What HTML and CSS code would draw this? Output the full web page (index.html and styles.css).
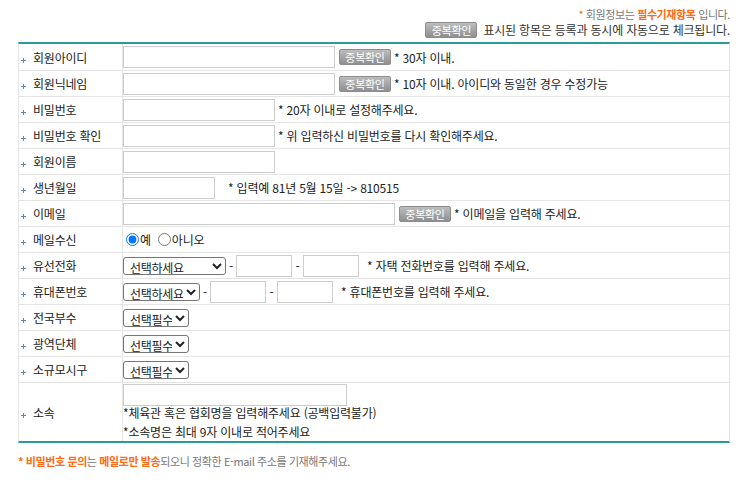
FILE: index.html
```html
<!DOCTYPE html>
<html lang="ko">
<head>
<meta charset="utf-8">
<title>회원가입</title>
<link rel="stylesheet" href="styles.css">
</head>
<body>
<div class="wrap">
  <p class="notice"><span class="req">*</span> 회원정보는 <b class="req">필수기재항목</b> 입니다.</p>
  <p class="notice2"><button class="chk" type="button">중복확인</button> 표시된 항목은 등록과 동시에 자동으로 체크됩니다.</p>

  <div class="form">
    <div class="row">
      <div class="lab"><i class="pl"></i>회원아이디</div>
      <div class="val"><input class="tx w-id" type="text"><button class="chk in" type="button">중복확인</button><span class="hint h3">* 30자 이내.</span></div>
    </div>
    <div class="row">
      <div class="lab"><i class="pl"></i>회원닉네임</div>
      <div class="val"><input class="tx w-id" type="text"><button class="chk in" type="button">중복확인</button><span class="hint h3">* 10자 이내. 아이디와 동일한 경우 수정가능</span></div>
    </div>
    <div class="row">
      <div class="lab"><i class="pl"></i>비밀번호</div>
      <div class="val"><input class="tx w-pw" type="password"><span class="hint h3">* 20자 이내로 설정해주세요.</span></div>
    </div>
    <div class="row">
      <div class="lab"><i class="pl"></i>비밀번호 확인</div>
      <div class="val"><input class="tx w-pw" type="password"><span class="hint h3">* 위 입력하신 비밀번호를 다시 확인해주세요.</span></div>
    </div>
    <div class="row">
      <div class="lab"><i class="pl"></i>회원이름</div>
      <div class="val"><input class="tx w-pw" type="text"></div>
    </div>
    <div class="row">
      <div class="lab"><i class="pl"></i>생년월일</div>
      <div class="val"><input class="tx w-birth" type="text"><span class="hint h13">* 입력예 81년 5월 15일 -&gt; 810515</span></div>
    </div>
    <div class="row">
      <div class="lab"><i class="pl"></i>이메일</div>
      <div class="val"><input class="tx w-mail" type="text"><button class="chk in" type="button">중복확인</button><span class="hint h3">* 이메일을 입력해 주세요.</span></div>
    </div>
    <div class="row">
      <div class="lab"><i class="pl"></i>메일수신</div>
      <div class="val">
        <label class="rd"><input type="radio" name="mail" checked>예</label>
        <label class="rd"><input type="radio" name="mail">아니오</label>
      </div>
    </div>
    <div class="row">
      <div class="lab"><i class="pl"></i>유선전화</div>
      <div class="val"><select class="sel w-tel"><option>선택하세요</option></select><span class="dash">-</span><input class="tx w-num" type="text"><span class="dash d2">-</span><input class="tx w-num" type="text"><span class="hint h8">* 자택 전화번호를 입력해 주세요.</span></div>
    </div>
    <div class="row">
      <div class="lab"><i class="pl"></i>휴대폰번호</div>
      <div class="val"><select class="sel w-hp"><option>선택하세요</option></select><span class="dash">-</span><input class="tx w-num" type="text"><span class="dash d2">-</span><input class="tx w-num" type="text"><span class="hint h8">* 휴대폰번호를 입력해 주세요.</span></div>
    </div>
    <div class="row">
      <div class="lab"><i class="pl"></i>전국부수</div>
      <div class="val"><select class="sel w-req"><option>선택필수</option></select></div>
    </div>
    <div class="row">
      <div class="lab"><i class="pl"></i>광역단체</div>
      <div class="val"><select class="sel w-req"><option>선택필수</option></select></div>
    </div>
    <div class="row">
      <div class="lab"><i class="pl"></i>소규모시구</div>
      <div class="val"><select class="sel w-req"><option>선택필수</option></select></div>
    </div>
    <div class="row tall">
      <div class="lab"><i class="pl"></i>소속</div>
      <div class="val stack">
        <input class="tx w-org" type="text">
        <p class="org-note">*체육관 혹은 협회명을 입력해주세요 (공백입력불가)<br>*소속명은 최대 9자 이내로 적어주세요</p>
      </div>
    </div>
  </div>

  <p class="foot"><b class="req">* 비밀번호 문의</b>는 <b class="req">메일로만 발송</b>되오니 정확한 E-mail 주소를 기재해주세요.</p>
</div>
</body>
</html>
```

FILE: styles.css
```css
* { box-sizing: border-box; }

body {
  margin: 0;
  background: #fff;
  font-family: "Noto Sans CJK KR", "Noto Sans", sans-serif;
  font-size: 12px;
  color: #222;
  letter-spacing: -0.2px;
}

.wrap {
  width: 712px;
  margin-left: 18px;
  padding-top: 6px;
}

.notice {
  margin: 0;
  height: 16px;
  line-height: 16px;
  text-align: right;
  font-size: 11px;
  color: #777;
  letter-spacing: -0.4px;
}

.notice2 {
  margin: 0 0 4px;
  height: 16px;
  line-height: 16px;
  text-align: right;
  color: #333;
  display: flex;
  justify-content: flex-end;
  align-items: center;
  gap: 6px;
}

.req { color: #ff6a13; font-weight: bold; }
.notice .req:first-child { font-weight: normal; }

.chk {
  width: 52px;
  height: 16px;
  margin: 0;
  padding: 0;
  border: 1px solid #8c8c8c;
  border-radius: 2px;
  background: linear-gradient(#bdbdbd, #8f8f8f);
  color: #fff;
  font-family: inherit;
  font-size: 11px;
  letter-spacing: -0.3px;
  line-height: 14px;
  cursor: pointer;
}

.chk.in { margin-left: 4px; }

.form {
  border-top: 2px solid #2a9b97;
  border-bottom: 2px solid #2a9b97;
  border-left: 1px solid #e5e5e5;
  border-right: 1px solid #e5e5e5;
}

.row {
  display: flex;
  height: 26px;
  border-bottom: 1px solid #e5e5e5;
}

.row:first-child { height: 27px; }

.row.tall {
  height: 58px;
  border-bottom: 0;
}

.lab {
  width: 104px;
  flex: none;
  display: flex;
  align-items: center;
  padding-left: 2px;
  border-right: 1px solid #e5e5e5;
  color: #222;
}

.pl {
  display: inline-block;
  width: 5px;
  height: 5px;
  margin: 6px 7px 0 0;
  background:
    linear-gradient(#6a8aa2, #6a8aa2) center / 5px 1px no-repeat,
    linear-gradient(#6a8aa2, #6a8aa2) center / 1px 5px no-repeat;
}

.val {
  flex: 1;
  display: flex;
  align-items: center;
  white-space: nowrap;
}

.tx {
  height: 22px;
  margin: 0;
  padding: 0 3px;
  border: 1px solid #cdcdcd;
  background: #fff;
  font-family: inherit;
  font-size: 12px;
}

.w-id { width: 212px; }
.w-pw { width: 152px; }
.w-birth { width: 92px; }
.w-mail { width: 272px; }
.w-num { width: 56px; }
.w-org { width: 224px; }

.hint { color: #222; }
.h3 { margin-left: 3px; }
.h8 { margin-left: 8px; }
.h13 { margin-left: 13px; }

.rd {
  display: flex;
  align-items: center;
  margin-right: 4px;
}

.rd input {
  width: 13px;
  height: 13px;
  margin: 0 1px 0 3px;
}

.sel {
  height: 18px;
  margin: 0;
  padding: 0 0 0 2px;
  font-family: inherit;
  font-size: 12px;
  letter-spacing: -0.3px;
  color: #222;
  border: 1px solid #767676;
  border-radius: 3px;
  background: #fff;
}

.w-tel { width: 103px; }
.w-hp { width: 77px; }
.w-req { width: 66px; }

.dash {
  width: 10px;
  text-align: center;
  letter-spacing: 0;
}

.dash.d2 { width: 11px; }

.val.stack {
  display: block;
  padding-top: 1px;
}

.val.stack .tx { display: block; }

.org-note {
  margin: -3px 0 0;
  line-height: 19px;
  color: #222;
}

.foot {
  margin: 10px 0 0;
  font-size: 11px;
  color: #777;
  line-height: 16px;
  letter-spacing: -0.4px;
}
```
